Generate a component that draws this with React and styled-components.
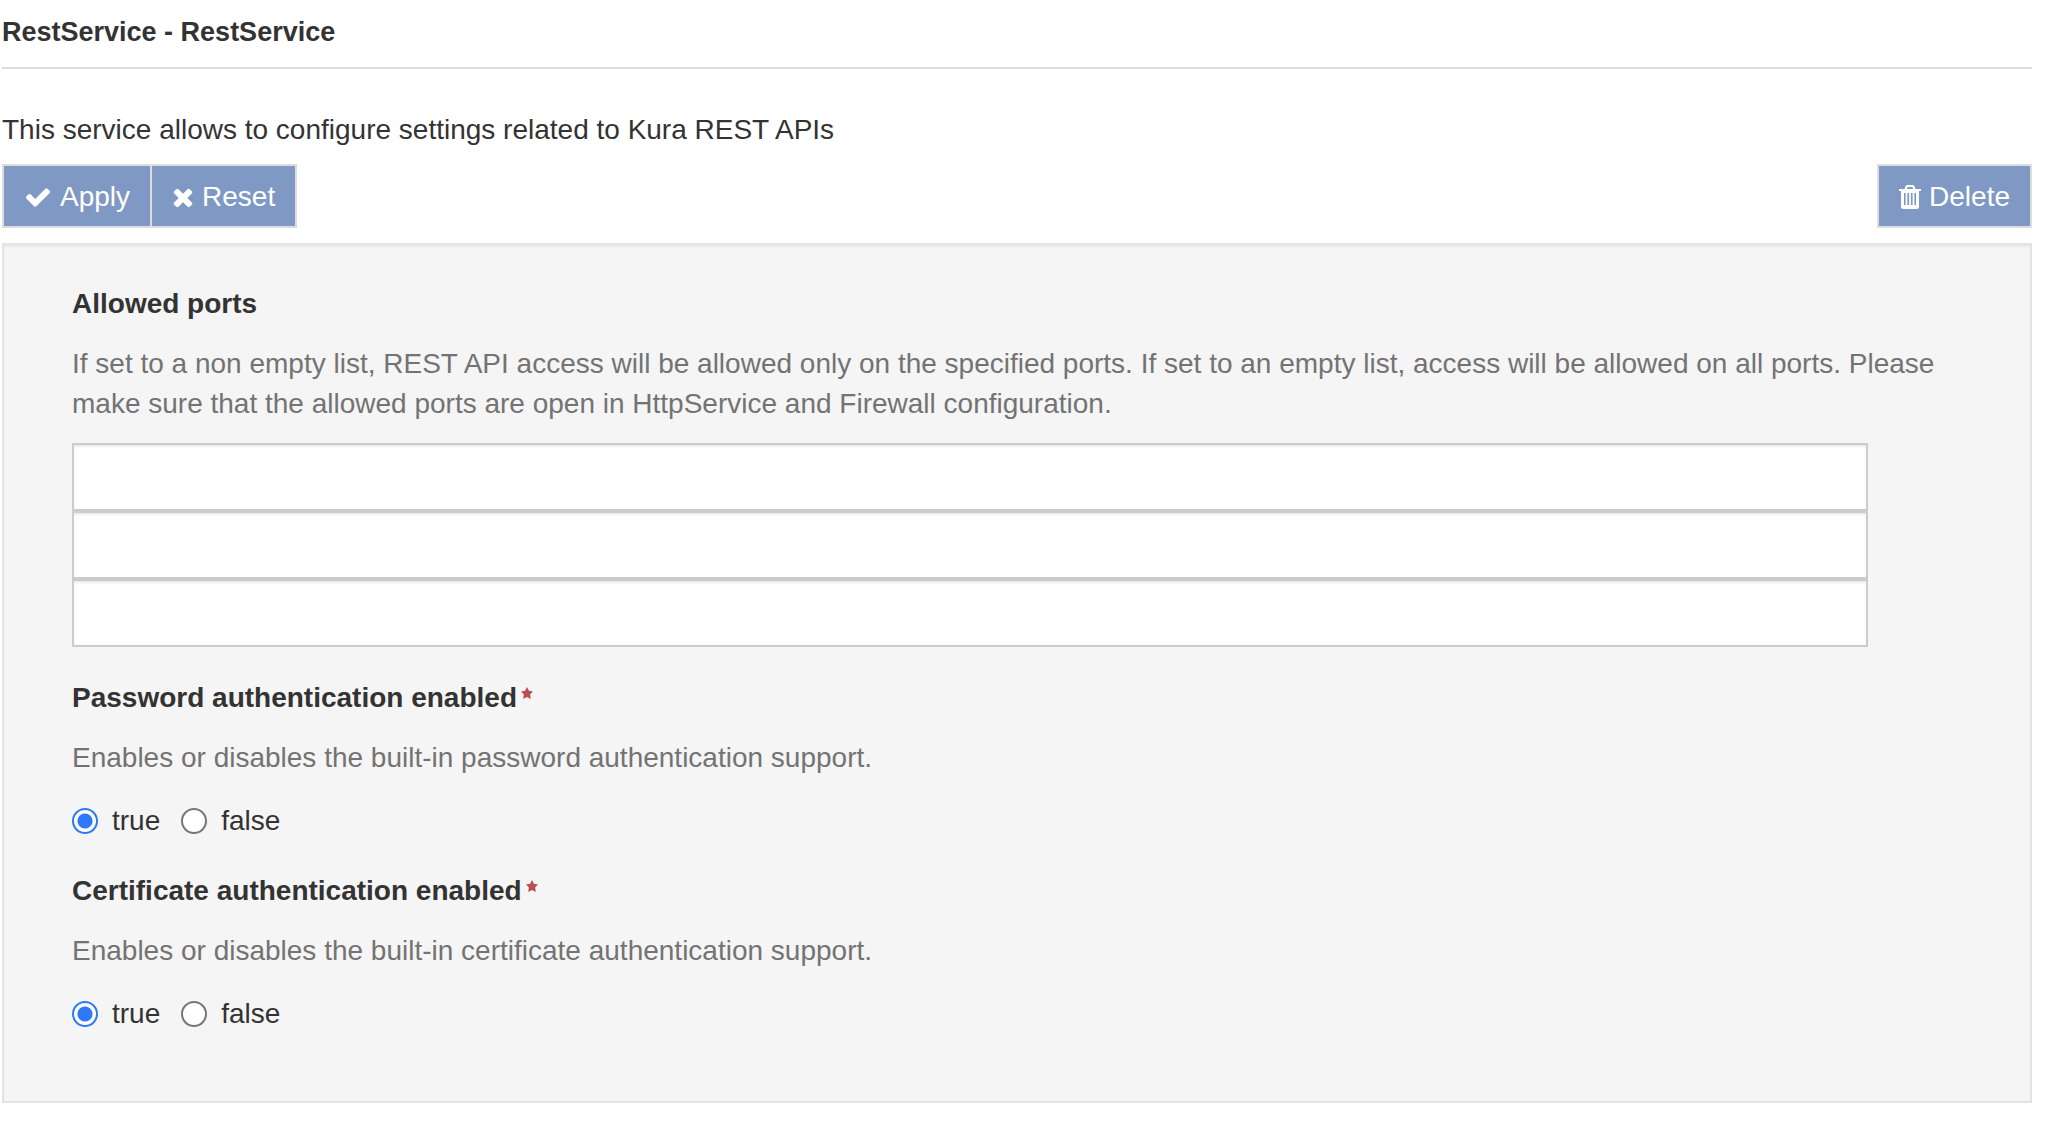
import React from 'react';
import styled, { createGlobalStyle } from 'styled-components';

const GlobalStyle = createGlobalStyle`
  * { box-sizing: border-box; }
  body {
    margin: 0;
    background: #fff;
    color: #333;
    font-family: "Liberation Sans", Arial, Helvetica, sans-serif;
    font-size: 28px;
    line-height: 40px;
  }
`;

const Page = styled.main`
  padding: 12px 20px 24px 2px;
`;

const Title = styled.h1`
  margin: 0 0 41px;
  padding-bottom: 15px;
  border-bottom: 2px solid #ddd;
  font-size: 27px;
  font-weight: 700;
`;

const Intro = styled.p`
  margin: 0 0 14px;
`;

const Toolbar = styled.div`
  display: flex;
  justify-content: space-between;
  margin-bottom: 15px;
`;

const ButtonGroup = styled.div`
  display: flex;
`;

const Button = styled.button`
  display: flex;
  align-items: center;
  gap: 8px;
  height: 64px;
  padding: 2px 20px 0;
  border: 2px solid #ddd;
  border-radius: 0;
  background: #7f99c4;
  color: #fff;
  font: inherit;
  cursor: pointer;

  & + & {
    margin-left: -2px;
  }
`;

const Glyph = styled.svg`
  width: ${(p) => p.$width}px;
  height: ${(p) => p.$height}px;
  fill: currentColor;
`;

const Panel = styled.form`
  display: flex;
  flex-direction: column;
  gap: 30px;
  padding: 39px 68px 67px;
  border: 2px solid #e3e3e3;
  background: #f5f5f5;
  box-shadow: inset 0 2px 2px rgba(0, 0, 0, 0.05);
`;

const Field = styled.fieldset`
  min-width: 0;
  margin: 0;
  padding: 0;
  border: 0;
`;

const FieldName = styled.legend`
  display: flex;
  gap: 4px;
  padding: 0;
  margin-bottom: 20px;
  font-weight: 700;
`;

const Required = styled.svg`
  width: 12px;
  height: 12px;
  margin-top: 9px;
  fill: #b5524f;
`;

const Help = styled.p`
  margin: 0;
  color: #737373;
`;

const Inputs = styled.div`
  display: flex;
  flex-direction: column;
  width: 95%;
  margin: 19px 0 1px;
`;

const TextInput = styled.input`
  width: 100%;
  height: 68px;
  padding: 12px 24px;
  border: 2px solid #ccc;
  border-radius: 0;
  background: #fff;
  color: #555;
  font: inherit;
  box-shadow: inset 0 2px 2px rgba(0, 0, 0, 0.075);
`;

const Options = styled.div`
  display: flex;
  gap: 21px;
  margin-top: 23px;
`;

const Option = styled.label`
  display: flex;
  align-items: center;
  gap: 14px;
`;

const Radio = styled.input`
  appearance: none;
  width: 26px;
  height: 26px;
  margin: 0;
  border: 2px solid #767676;
  border-radius: 50%;
  background: #fff;

  &:checked {
    border-color: #2f78f7;
    background: radial-gradient(circle, #2f78f7 0 7px, #fff 8px);
  }
`;

const icons = {
  check: {
    width: 28,
    height: 28,
    box: '0 0 1792 1792',
    d: 'M1671 566q0 40-28 68l-724 724-136 136q-28 28-68 28t-68-28l-136-136-362-362q-28-28-28-68t28-68l136-136q28-28 68-28t68 28l294 295 656-657q28-28 68-28t68 28l136 136q28 28 28 68z',
  },
  times: {
    width: 22,
    height: 28,
    box: '192 0 1408 1792',
    d: 'M1490 1322q0 40-28 68l-136 136q-28 28-68 28t-68-28l-294-294-294 294q-28 28-68 28t-68-28l-136-136q-28-28-28-68t28-68l294-294-294-294q-28-28-28-68t28-68l136-136q28-28 68-28t68 28l294 294 294-294q28-28 68-28t68 28l136 136q28 28 28 68t-28 68l-294 294 294 294q28 28 28 68z',
  },
  trash: {
    width: 22,
    height: 24,
    box: '0 0 22 24',
    d: 'M5.500 4l1-2.600Q7 0 8.500 0h5q1.500 0 2 1.400l1 2.600H21.500q.5 0 .5.500v1q0 .5-.5.500H20v15.500q0 2.500-2.500 2.500h-13Q2 24 2 21.500V6H.5Q0 6 0 5.500v-1Q0 4 .5 4zM7.800 4h6.400l-.7-1.700q-.1-.3-.5-.3H9q-.4 0-.5.300zM5 8v12h1.600V8zM8.400 8v12h1.700V8zM11.900 8v12h1.700V8zM15.400 8v12H17V8z',
  },
};

function Icon({ name }) {
  const { width, height, box, d } = icons[name];
  return (
    <Glyph $width={width} $height={height} viewBox={box} aria-hidden="true">
      <path fillRule="evenodd" d={d} />
    </Glyph>
  );
}

function BooleanField({ id, name, help }) {
  return (
    <Field>
      <FieldName>
        {name}
        <Required viewBox="0 0 24 24" aria-hidden="true">
          <path d="M12 0l3.900 7.600 8.100 1.300-5.700 6.100 1.300 9L12 20l-7.600 4 1.300-9L0 8.900l8.100-1.300z" />
        </Required>
      </FieldName>
      <Help>{help}</Help>
      <Options>
        <Option htmlFor={`${id}-true`}>
          <Radio type="radio" id={`${id}-true`} name={id} value="true" defaultChecked />
          true
        </Option>
        <Option htmlFor={`${id}-false`}>
          <Radio type="radio" id={`${id}-false`} name={id} value="false" />
          false
        </Option>
      </Options>
    </Field>
  );
}

export default function App() {
  return (
    <>
      <GlobalStyle />
      <Page>
        <Title>RestService - RestService</Title>
        <Intro>This service allows to configure settings related to Kura REST APIs</Intro>
        <Toolbar>
          <ButtonGroup>
            <Button type="button"><Icon name="check" />Apply</Button>
            <Button type="button"><Icon name="times" />Reset</Button>
          </ButtonGroup>
          <Button type="button"><Icon name="trash" />Delete</Button>
        </Toolbar>
        <Panel>
          <Field>
            <FieldName>Allowed ports</FieldName>
            <Help>
              If set to a non empty list, REST API access will be allowed only on the specified
              ports. If set to an empty list, access will be allowed on all ports. Please make
              sure that the allowed ports are open in HttpService and Firewall configuration.
            </Help>
            <Inputs>
              {[1, 2, 3].map((n) => (
                <TextInput key={n} type="text" aria-label={`Allowed port ${n}`} />
              ))}
            </Inputs>
          </Field>
          <BooleanField
            id="password-auth"
            name="Password authentication enabled"
            help="Enables or disables the built-in password authentication support."
          />
          <BooleanField
            id="certificate-auth"
            name="Certificate authentication enabled"
            help="Enables or disables the built-in certificate authentication support."
          />
        </Panel>
      </Page>
    </>
  );
}
